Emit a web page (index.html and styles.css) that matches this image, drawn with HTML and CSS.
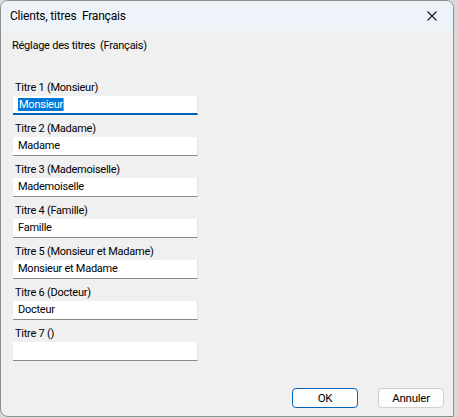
FILE: index.html
```html
<!DOCTYPE html>
<html lang="fr">
<head>
    <meta charset="UTF-8">
    <meta name="viewport" content="width=device-width, initial-scale=1.0">
    <title>Clients, titres Français</title>
    <link rel="stylesheet" href="styles.css">
</head>
<body>
    <div class="window">
        <div class="titlebar">
            <span class="title">Clients, titres&nbsp; Français</span>
            <span class="close">
                <svg width="10" height="10" viewBox="0 0 10 10"><path d="M0.5 0.5 L9.5 9.5 M9.5 0.5 L0.5 9.5" stroke="#1a1a1a" stroke-width="1.1" fill="none"/></svg>
            </span>
        </div>
        <div class="content">
            <p class="heading">Réglage des titres&nbsp; (Français)</p>
            <div class="fields">
                <div class="field">
                    <span class="label">Titre 1 (Monsieur)</span>
                    <div class="input focused"><span class="sel">Monsieur</span><span class="caret"></span></div>
                </div>
                <div class="field">
                    <span class="label">Titre 2 (Madame)</span>
                    <div class="input">Madame</div>
                </div>
                <div class="field">
                    <span class="label">Titre 3 (Mademoiselle)</span>
                    <div class="input">Mademoiselle</div>
                </div>
                <div class="field">
                    <span class="label">Titre 4 (Famille)</span>
                    <div class="input">Famille</div>
                </div>
                <div class="field">
                    <span class="label">Titre 5 (Monsieur et Madame)</span>
                    <div class="input">Monsieur et Madame</div>
                </div>
                <div class="field">
                    <span class="label">Titre 6 (Docteur)</span>
                    <div class="input">Docteur</div>
                </div>
                <div class="field">
                    <span class="label">Titre 7 ()</span>
                    <div class="input"></div>
                </div>
            </div>
            <div class="actions">
                <button class="btn primary">OK</button>
                <button class="btn">Annuler</button>
            </div>
        </div>
    </div>
</body>
</html>
```

FILE: styles.css
```css
*{
    margin: 0;
    padding: 0;
    box-sizing: border-box;
}
body{
    background: #d9d9d9;
    font-family: Roboto, "Noto Sans", sans-serif;
    font-size: 11px;
    letter-spacing: -0.25px;
    color: #000;
}
.window{
    width: 454px;
    height: 417px;
    border: 1px solid #8f8f8f;
    border-radius: 8px 8px 0 8px;
    background: #f0f0f0;
    overflow: hidden;
    display: flex;
    flex-direction: column;
}
.titlebar{
    height: 30px;
    background: #eef3f9;
    display: flex;
    align-items: center;
    padding-left: 9px;
}
.title{
    flex: 1;
    font-size: 12px;
    letter-spacing: -0.2px;
    line-height: 16px;
}
.close{
    width: 46px;
    height: 30px;
    display: flex;
    align-items: center;
    justify-content: center;
    margin-right: -2px;
}
.content{
    flex: 1;
    display: flex;
    flex-direction: column;
    padding: 7px 9px 8px 12px;
}
.heading{
    line-height: 16px;
    margin-left: -1px;
}
.fields{
    margin-top: 26px;
    display: flex;
    flex-direction: column;
    gap: 6px;
}
.field{
    display: flex;
    flex-direction: column;
}
.label{
    line-height: 16px;
    padding-left: 2px;
}
.input{
    width: 185px;
    height: 19px;
    background: #fff;
    border-bottom: 1px solid #8a8a8a;
    border-right: 1px solid #e3e3e3;
    padding-left: 5px;
    line-height: 18px;
    display: flex;
    align-items: center;
}
.input.focused{
    border-bottom: 2px solid #005fb8;
    border-right-color: #dbe6f2;
}
.sel{
    background: #0078d7;
    color: #fff;
    line-height: 13px;
    padding-left: 1px;
}
.caret{
    width: 1px;
    height: 13px;
    background: #ff8728;
}
.actions{
    margin-top: auto;
    display: flex;
    justify-content: flex-end;
    gap: 20px;
}
.btn{
    width: 66px;
    height: 20px;
    font-family: inherit;
    font-size: 11.5px;
    letter-spacing: inherit;
    background: #fdfdfd;
    border: 1px solid #d0d0d0;
    border-radius: 4px;
    color: #000;
}
.btn.primary{
    border-color: #0067c0;
}
```
